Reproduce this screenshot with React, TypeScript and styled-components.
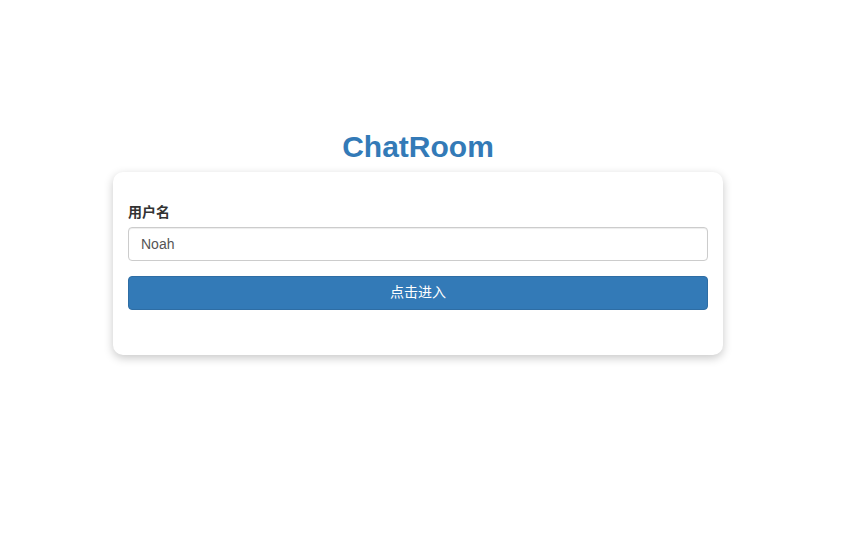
import React from "react";
import styled, { createGlobalStyle } from "styled-components";

const GlobalStyle = createGlobalStyle`
  html, body {
    margin: 0;
    padding: 0;
    background: #ffffff;
  }
  body {
    font-family: "Liberation Sans", "Noto Sans CJK SC", Arial, sans-serif;
    font-size: 14px;
    line-height: 1.42857;
    color: #333333;
  }
  * { box-sizing: border-box; }
`;

const Page = styled.div`
  min-height: 100vh;
  padding: 130px 5px 40px 0;
`;

const Title = styled.h1`
  margin: 0 0 9px;
  font-size: 30px;
  line-height: 33px;
  font-weight: 700;
  color: #337ab7;
  text-align: center;
`;

const Card = styled.div`
  width: 610px;
  margin: 0 auto;
  background: #ffffff;
  border-radius: 10px;
  box-shadow: 0 3px 10px rgba(0, 0, 0, 0.22);
  padding: 30px 15px 30px;
`;

const FormGroup = styled.div`
  margin-bottom: 15px;
`;

const Label = styled.label`
  display: block;
  margin-bottom: 5px;
  font-weight: 700;
  font-size: 14px;
  line-height: 20px;
  color: #333333;
`;

const Input = styled.input`
  display: block;
  width: 100%;
  height: 34px;
  padding: 6px 12px;
  font-family: inherit;
  font-size: 14px;
  line-height: 1.42857;
  color: #555555;
  background: #ffffff;
  border: 1px solid #cccccc;
  border-radius: 4px;
  box-shadow: inset 0 1px 1px rgba(0, 0, 0, 0.075);
  outline: none;
`;

const Button = styled.button`
  display: block;
  width: 100%;
  height: 34px;
  padding: 6px 12px;
  margin-bottom: 15px;
  font-family: inherit;
  font-size: 14px;
  line-height: 1.42857;
  color: #ffffff;
  background: #337ab7;
  border: 1px solid #2e6da4;
  border-radius: 4px;
  cursor: pointer;
`;

export default function App() {
  return (
    <>
      <GlobalStyle />
      <Page>
        <Title>ChatRoom</Title>
        <Card>
          <FormGroup>
            <Label htmlFor="username">用户名</Label>
            <Input id="username" defaultValue="Noah" />
          </FormGroup>
          <Button type="button">点击进入</Button>
        </Card>
      </Page>
    </>
  );
}
